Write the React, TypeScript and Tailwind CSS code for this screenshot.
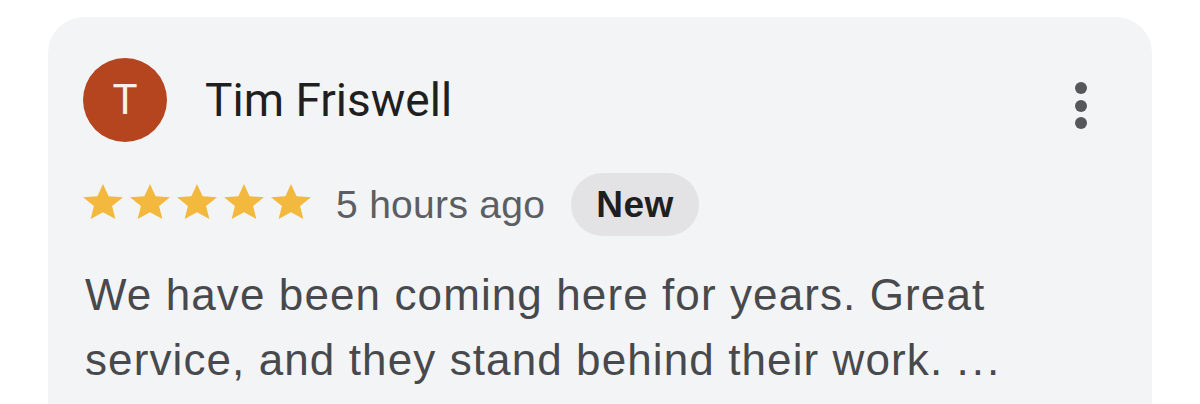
import React from "react"

const Star = () => (
  <svg width="40" height="35" viewBox="2 2 20 19" preserveAspectRatio="none" className="shrink-0">
    <path
      fill="#f3b93e"
      d="M12 2 L14.81 8.63 L22 9.24 L16.54 13.97 L18.18 21 L12 17.27 L5.82 21 L7.46 13.97 L2 9.24 L9.19 8.63 Z"
    />
  </svg>
)

export default function App() {
  return (
    <div className="h-[404px] overflow-hidden bg-white pt-[17px] pl-[48px]" style={{ fontFamily: "Roboto, 'Noto Sans', sans-serif" }}>
      <div className="w-[1104px] h-[420px] rounded-[36px] bg-[#f3f4f6] pt-[41px] pl-[35px]">
        {/* header */}
        <div className="flex items-center h-[84px]">
          <div className="w-[84px] h-[84px] rounded-full bg-[#b4451f] flex items-center justify-center text-[42px] text-[#fbefe9] leading-none">
            T
          </div>
          <div className="ml-[38px] text-[46px] leading-none text-[#1f1f1f]">Tim Friswell</div>
          <div className="ml-auto mr-[65px] mt-[11px] flex flex-col gap-[5.5px]">
            <span className="block w-[12px] h-[12px] rounded-full bg-[#55575a]" />
            <span className="block w-[12px] h-[12px] rounded-full bg-[#55575a]" />
            <span className="block w-[12px] h-[12px] rounded-full bg-[#55575a]" />
          </div>
        </div>

        {/* rating row */}
        <div className="flex items-center mt-[31px] h-[63px] font-['Liberation_Sans',Arial,sans-serif]">
          <div className="flex gap-[7px] -mt-[6px]">
            <Star />
            <Star />
            <Star />
            <Star />
            <Star />
          </div>
          <span className="ml-[25px] text-[39px] tracking-[0.3px] leading-none text-[#5b5e62]">5 hours ago</span>
          <span className="ml-[26px] h-[63px] px-[25px] rounded-full bg-[#e3e3e5] flex items-center text-[37px] font-bold tracking-[0.5px] leading-none text-[#1f1f1f]">
            New
          </span>
        </div>

        {/* body */}
        <p className="mt-[26px] ml-[2px] font-['Liberation_Sans',Arial,sans-serif] text-[44px] tracking-[1.1px] leading-[65px] text-[#48494c]">
          We have been coming here for years. Great
          <br />
          service, and they stand behind their work. <span className="tracking-[3px]">...</span>
        </p>
      </div>
    </div>
  )
}
